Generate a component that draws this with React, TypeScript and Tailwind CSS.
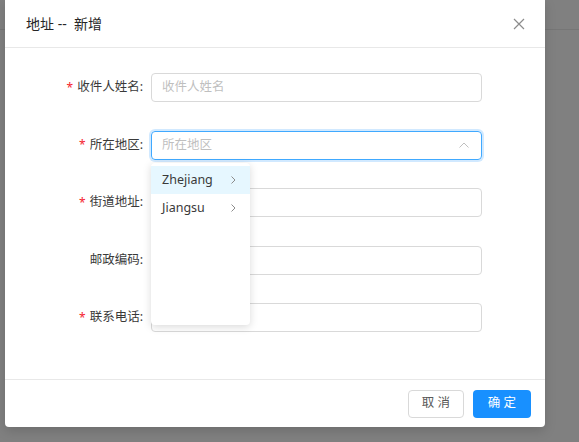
import React from 'react';

const rows = [
  { label: '收件人姓名', required: true, placeholder: '收件人姓名' },
  { label: '所在地区', required: true, placeholder: '所在地区', select: true },
  { label: '街道地址', required: true, placeholder: '' },
  { label: '邮政编码', required: false, placeholder: '' },
  { label: '联系电话', required: true, placeholder: '' },
];

function CloseIcon() {
  return (
    <svg width="12" height="12" viewBox="0 0 12 12" fill="none">
      <path d="M1 1L11 11M11 1L1 11" stroke="#8c8c8c" strokeWidth="1.2" />
    </svg>
  );
}

function ChevronUp() {
  return (
    <svg width="10" height="6" viewBox="0 0 10 6" fill="none">
      <path d="M0.5 5.5L5 1L9.5 5.5" stroke="#bfbfbf" strokeWidth="1" />
    </svg>
  );
}

function ChevronRight() {
  return (
    <svg width="5" height="8" viewBox="0 0 5 8" fill="none">
      <path d="M0.5 0.5L4 4L0.5 7.5" stroke="#8c8c8c" strokeWidth="1" />
    </svg>
  );
}

export default function App() {
  return (
    <div className="relative w-[579px] h-[442px] overflow-hidden bg-[#808080] font-['Noto_Sans','Noto_Sans_CJK_SC',sans-serif] text-[12.5px]">
      {/* page behind the mask */}
      <div className="h-[30px] border-b border-[#767676]" />

      {/* Modal */}
      <div className="absolute left-[5px] top-0 w-[540px] h-[427px] bg-white rounded-b-[4px] shadow-[0_4px_12px_rgba(0,0,0,0.15)] flex flex-col">
        {/* Header */}
        <div className="h-[48px] flex-shrink-0 flex items-center justify-between pl-[21px] pr-[20px] border-b border-[#e8e8e8]">
          <span className="text-[14px] text-[#262626] whitespace-pre leading-none">地址 --  新增</span>
          <CloseIcon />
        </div>

        {/* Body */}
        <div className="relative h-[331px] flex-shrink-0 pt-[25px]">
          <div className="flex flex-col gap-[28.5px]">
            {rows.map((r) => (
              <div key={r.label} className="flex items-center h-[29px]">
                <div className="w-[146px] flex-shrink-0 flex items-center justify-end pr-[8px] text-[#3a3a3a]">
                  {r.required && <span className="text-[#f5222d] text-[12px] mr-[4px] leading-none">*</span>}
                  <span>{r.label}</span>
                  <span>:</span>
                </div>
                {r.select ? (
                  <div className="w-[331px] h-[29px] flex items-center justify-between pl-[10px] pr-[12px] border border-[#40a9ff] rounded-[4px] shadow-[0_0_0_2px_rgba(24,144,255,0.2)]">
                    <span className="text-[#bfbfbf]">{r.placeholder}</span>
                    <ChevronUp />
                  </div>
                ) : (
                  <div className="w-[331px] h-[29px] flex items-center pl-[10px] border border-[#d9d9d9] rounded-[4px]">
                    <span className="text-[#bfbfbf]">{r.placeholder}</span>
                  </div>
                )}
              </div>
            ))}
          </div>

          {/* Cascader dropdown */}
          <div className="absolute left-[146px] top-[115px] w-[99px] h-[162px] bg-white rounded-[4px] shadow-[0_2px_8px_rgba(0,0,0,0.15)] py-[3px]">
            {[
              { name: 'Zhejiang', active: true },
              { name: 'Jiangsu', active: false },
            ].map((o) => (
              <div
                key={o.name}
                className={`h-[28px] flex items-center justify-between pl-[11px] pr-[14px] text-[#3a3a3a] ${o.active ? 'bg-[#e6f7ff]' : ''}`}
              >
                <span>{o.name}</span>
                <ChevronRight />
              </div>
            ))}
          </div>
        </div>

        {/* Footer */}
        <div className="h-[48px] flex-shrink-0 flex items-center justify-end gap-[9px] pr-[14px] border-t border-[#e8e8e8]">
          <button className="w-[56px] h-[28px] border border-[#d9d9d9] rounded-[4px] bg-white text-[#595959] whitespace-pre">取 消</button>
          <button className="w-[58px] h-[28px] rounded-[4px] bg-[#1890ff] text-white whitespace-pre">确 定</button>
        </div>
      </div>
    </div>
  );
}
